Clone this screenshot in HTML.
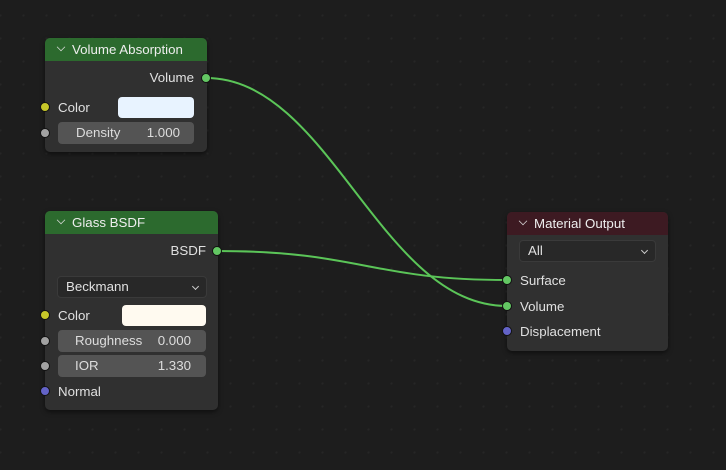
<!DOCTYPE html>
<html><head><style>
*{margin:0;padding:0;box-sizing:border-box}
body{width:726px;height:470px;overflow:hidden;background-color:#1d1d1d;
background-image:radial-gradient(circle,#262626 1px,transparent 1.2px);background-size:23px 23px;background-position:-11px 4px;
font-family:"Liberation Sans","DejaVu Sans",sans-serif;font-size:13.3px;color:#e0e0e0;position:relative}
.node{position:absolute;background:#303030;border-radius:5px;box-shadow:0 2px 5px rgba(0,0,0,.5)}
.hd{height:23px;border-radius:5px 5px 0 0;padding-left:12px;line-height:23px;color:#eee;font-size:13.3px}
.hd span{display:inline-block;width:8px;height:8px;border-right:1.3px solid #ddd;border-bottom:1.3px solid #ddd;transform:rotate(45deg) scale(.75);margin-right:7px;position:relative;top:-3px}
.a{position:absolute;white-space:nowrap}
.sock{position:absolute;width:10px;height:10px;border-radius:50%;border:1px solid #111}
.fld{position:absolute;background:#545454;border-radius:4px;height:22px;line-height:22px;color:#ddd}
.dd{position:absolute;background:#282828;border:1px solid #3a3a3a;border-radius:4px;height:22px;line-height:20px;padding-left:8px}
.dd i{position:absolute;right:8px;top:7px;width:5px;height:5px;border-right:1.2px solid #ccc;border-bottom:1.2px solid #ccc;transform:rotate(45deg)}
.sw{position:absolute;border-radius:4px;height:21px}
</style></head><body>
<svg style="position:absolute;left:0;top:0" width="726" height="470">
<path d="M206 78 C330 78 380 306 507 306" stroke="#5bc558" stroke-width="2" fill="none"/>
<path d="M217 251 C360 251 370 280 507 280" stroke="#5bc558" stroke-width="2" fill="none"/>
</svg>

<div class="node" style="left:45px;top:38px;width:162px;height:114px">
<div class="hd" style="background:#2c6a2e"><span></span>Volume Absorption</div>
<div class="a" style="right:13px;top:32px">Volume</div>
<div class="a" style="left:13px;top:62px">Color</div>
<div class="sw" style="left:73px;top:59px;width:76px;background:#e8f3ff"></div>
<div class="fld" style="left:13px;top:84px;width:136px"><span style="position:absolute;left:18px">Density</span><span style="position:absolute;right:14px">1.000</span></div>
</div>
<div class="sock" style="left:201px;top:73px;background:#63c763"></div>
<div class="sock" style="left:40px;top:102px;background:#c7c729"></div>
<div class="sock" style="left:40px;top:128px;background:#a1a1a1"></div>

<div class="node" style="left:45px;top:211px;width:173px;height:199px">
<div class="hd" style="background:#2c6a2e"><span></span>Glass BSDF</div>
<div class="a" style="right:12px;top:32px">BSDF</div>
<div class="dd" style="left:12px;top:65px;width:150px">Beckmann<i></i></div>
<div class="a" style="left:13px;top:97px">Color</div>
<div class="sw" style="left:77px;top:94px;width:84px;background:#fffaf0"></div>
<div class="fld" style="left:13px;top:119px;width:148px"><span style="position:absolute;left:17px">Roughness</span><span style="position:absolute;right:15px">0.000</span></div>
<div class="fld" style="left:13px;top:144px;width:148px"><span style="position:absolute;left:17px">IOR</span><span style="position:absolute;right:15px">1.330</span></div>
<div class="a" style="left:13px;top:173px">Normal</div>
</div>
<div class="sock" style="left:212px;top:246px;background:#63c763"></div>
<div class="sock" style="left:40px;top:310px;background:#c7c729"></div>
<div class="sock" style="left:40px;top:336px;background:#a1a1a1"></div>
<div class="sock" style="left:40px;top:361px;background:#a1a1a1"></div>
<div class="sock" style="left:40px;top:386px;background:#6363c7"></div>

<div class="node" style="left:507px;top:212px;width:161px;height:139px">
<div class="hd" style="background:#3d1a22"><span></span>Material Output</div>
<div class="dd" style="left:12px;top:28px;width:137px">All<i></i></div>
<div class="a" style="left:13px;top:61px">Surface</div>
<div class="a" style="left:13px;top:87px">Volume</div>
<div class="a" style="left:13px;top:112px">Displacement</div>
</div>
<div class="sock" style="left:502px;top:275px;background:#63c763"></div>
<div class="sock" style="left:502px;top:301px;background:#63c763"></div>
<div class="sock" style="left:502px;top:326px;background:#6363c7"></div>
</body></html>
